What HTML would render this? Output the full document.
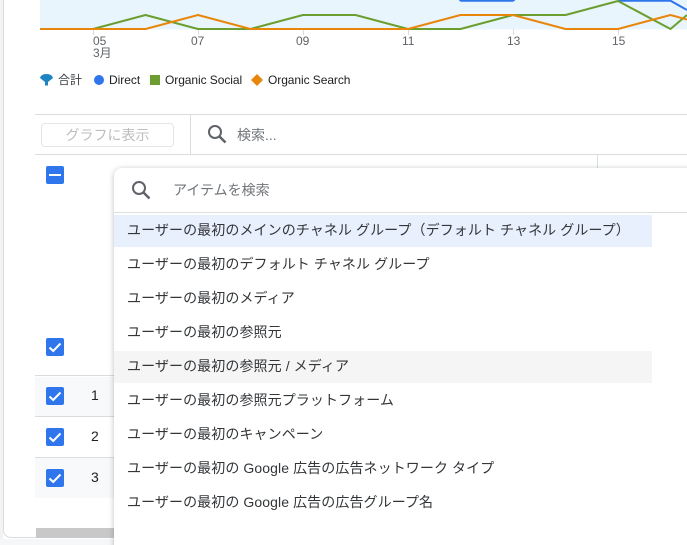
<!DOCTYPE html>
<html lang="ja"><head><meta charset="utf-8"><style>
html,body{margin:0;padding:0;width:687px;height:545px;overflow:hidden;background:#fff}
body{position:relative;font-family:"Liberation Sans","Noto Sans CJK JP",sans-serif;color:#3c4043}
.a{position:absolute}
.t{position:absolute;white-space:nowrap;line-height:16px}
.cb{position:absolute;left:46px;width:18px;height:18px;background:#2f76ed;border-radius:2px}
.cb svg{display:block}
.it{position:absolute;left:114px;width:538px;height:32px;line-height:31px;padding-left:13px;box-sizing:border-box;font-size:14px;letter-spacing:.09px;color:#333639;white-space:nowrap}
.line{position:absolute;background:#dadce0}
</style></head><body>
<div class="a" style="left:0;top:0;width:3px;height:545px;background:#f1f3f4"></div>
<div class="a" style="left:3px;top:-10px;width:700px;height:548px;box-sizing:border-box;border:1px solid #dadce0;border-radius:8px;background:#fff"></div>
<div class="a" style="left:0;top:539px;width:687px;height:6px;background:#f6f7f9"></div>

<svg class="a" style="left:0;top:0" width="687" height="60" viewBox="0 0 687 60">
<rect x="40" y="0" width="647" height="29.5" fill="#e8f5fd"/>
<g stroke="#dadce0" stroke-width="1"><line x1="93.5" y1="29" x2="93.5" y2="35"/><line x1="198.5" y1="29" x2="198.5" y2="35"/><line x1="303.5" y1="29" x2="303.5" y2="35"/><line x1="408.5" y1="29" x2="408.5" y2="35"/><line x1="513.5" y1="29" x2="513.5" y2="35"/><line x1="618.5" y1="29" x2="618.5" y2="35"/></g>
<g fill="none" stroke-width="2" stroke-linejoin="round">
<polyline stroke="#2f76ed" points="459,-1 461,0.700 513,0.700 515,-1"/>
<polyline stroke="#2f76ed" points="618,0.700 670.500,0.700 687,10"/>
<polyline stroke="#6b9e2f" points="93,29 145.500,15 198,29 250.500,29 303,15 355.500,15 408,29 460.500,29 513,15 565.500,15 618,1 670.500,29 687,15"/>
<polyline stroke="#e8860c" points="40,29 145.500,29 198,15 250.500,29 408,29 460.500,15 513,15 565.500,29 618,29 670.500,15 687,19.500"/>
</g>
</svg>
<div class="t" style="left:93px;top:33px;font-size:12px;color:#5f6368">05</div>
<div class="t" style="left:93px;top:45px;font-size:12px;color:#5f6368">3月</div>
<div class="t" style="left:191px;top:33px;font-size:12px;color:#5f6368">07</div>
<div class="t" style="left:296px;top:33px;font-size:12px;color:#5f6368">09</div>
<div class="t" style="left:402px;top:33px;font-size:12px;color:#5f6368">11</div>
<div class="t" style="left:507px;top:33px;font-size:12px;color:#5f6368">13</div>
<div class="t" style="left:612px;top:33px;font-size:12px;color:#5f6368">15</div>

<svg class="a" style="left:39px;top:72px" width="15" height="15" viewBox="0 0 15 15"><path d="M1 6C1.500 3.500 4 2 7.500 2S13.500 3.500 14 6L9 10V13.500H6V10Z" fill="#1f84c4"/></svg>
<div class="t" style="left:58px;top:72px;font-size:12px;color:#3c4043">合計</div>
<div class="a" style="left:94px;top:75px;width:10px;height:10px;border-radius:50%;background:#2f76ed"></div>
<div class="t" style="left:109px;top:72px;font-size:12px;letter-spacing:-.03px;color:#202124">Direct</div>
<div class="a" style="left:150px;top:75px;width:10px;height:10px;background:#6b9e2f"></div>
<div class="t" style="left:165px;top:72px;font-size:12px;letter-spacing:-.07px;color:#202124">Organic Social</div>
<svg class="a" style="left:250px;top:73px" width="14" height="14" viewBox="0 0 14 14"><path d="M7 1l6 6-6 6-6-6z" fill="#e8860c"/></svg>
<div class="t" style="left:268px;top:72px;font-size:12px;letter-spacing:-.07px;color:#202124">Organic Search</div>

<div class="line" style="left:35px;top:114px;width:652px;height:1px"></div>
<div class="line" style="left:35px;top:154px;width:652px;height:1px"></div>
<div class="line" style="left:190px;top:115px;width:1px;height:39px"></div>
<div class="line" style="left:597px;top:155px;width:1px;height:14px"></div>
<div class="a" style="left:41px;top:123px;width:133px;height:24px;box-sizing:border-box;border:1px solid #e3e5e8;border-radius:4px;text-align:center;font-size:14px;line-height:22px;color:#bdbdbd">グラフに表示</div>
<svg class="a" style="left:206px;top:123px" width="22" height="22" viewBox="0 0 22 22"><circle cx="9" cy="9" r="6" fill="none" stroke="#5f6368" stroke-width="2"/><path d="M13.500 13.500l6 6" stroke="#5f6368" stroke-width="2.500" fill="none"/></svg>
<div class="t" style="left:237px;top:127px;font-size:14px;color:#70757a">検索...</div>

<div class="cb" style="top:166px"><svg width="18" height="18" viewBox="0 0 18 18"><rect x="3" y="8" width="12" height="2" fill="#fff"/></svg></div>
<div class="cb" style="top:338px"><svg width="18" height="18" viewBox="0 0 18 18"><path d="M3.500 9.500l3.700 3.500 7.300-7.500" fill="none" stroke="#fff" stroke-width="2"/></svg></div>

<div class="a" style="left:35px;top:377px;width:90px;height:39px;background:#f8f9fa"></div>
<div class="a" style="left:35px;top:458px;width:90px;height:40px;background:#f8f9fa"></div>
<div class="line" style="left:35px;top:375px;width:90px;height:1px"></div>
<div class="line" style="left:35px;top:416px;width:90px;height:1px"></div>
<div class="line" style="left:35px;top:457px;width:90px;height:1px"></div>
<div class="cb" style="top:387px"><svg width="18" height="18" viewBox="0 0 18 18"><path d="M3.500 9.500l3.700 3.500 7.300-7.500" fill="none" stroke="#fff" stroke-width="2"/></svg></div>
<div class="cb" style="top:428px"><svg width="18" height="18" viewBox="0 0 18 18"><path d="M3.500 9.500l3.700 3.500 7.300-7.500" fill="none" stroke="#fff" stroke-width="2"/></svg></div>
<div class="cb" style="top:469px"><svg width="18" height="18" viewBox="0 0 18 18"><path d="M3.500 9.500l3.700 3.500 7.300-7.500" fill="none" stroke="#fff" stroke-width="2"/></svg></div>
<div class="t" style="left:91px;top:387px;font-size:14px;color:#202124">1</div>
<div class="t" style="left:91px;top:428px;font-size:14px;color:#202124">2</div>
<div class="t" style="left:91px;top:469px;font-size:14px;color:#202124">3</div>
<div class="a" style="left:36px;top:528px;width:90px;height:10px;background:#c8c8c8"></div>

<div class="a" style="left:114px;top:168px;width:600px;height:400px;background:#fff;border-radius:8px 0 0 0;box-shadow:0 1px 6px rgba(60,64,67,.35)"></div>
<svg class="a" style="left:130px;top:179px" width="22" height="22" viewBox="0 0 22 22"><circle cx="9" cy="9" r="6" fill="none" stroke="#5f6368" stroke-width="2"/><path d="M13.500 13.500l6 6" stroke="#5f6368" stroke-width="2.500" fill="none"/></svg>
<div class="t" style="left:173px;top:182px;font-size:14px;color:#70757a">アイテムを検索</div>
<div class="line" style="left:114px;top:212px;width:573px;height:1px"></div>

<div class="it" style="top:215px;background:#e8effd">ユーザーの最初のメインのチャネル グループ（デフォルト チャネル グループ）</div>
<div class="it" style="top:249px">ユーザーの最初のデフォルト チャネル グループ</div>
<div class="it" style="top:283px">ユーザーの最初のメディア</div>
<div class="it" style="top:317px">ユーザーの最初の参照元</div>
<div class="it" style="top:351px;background:#f5f5f5">ユーザーの最初の参照元 / メディア</div>
<div class="it" style="top:385px">ユーザーの最初の参照元プラットフォーム</div>
<div class="it" style="top:419px">ユーザーの最初のキャンペーン</div>
<div class="it" style="top:453px">ユーザーの最初の Google 広告の広告ネットワーク タイプ</div>
<div class="it" style="top:487px">ユーザーの最初の Google 広告の広告グループ名</div>
</body></html>
